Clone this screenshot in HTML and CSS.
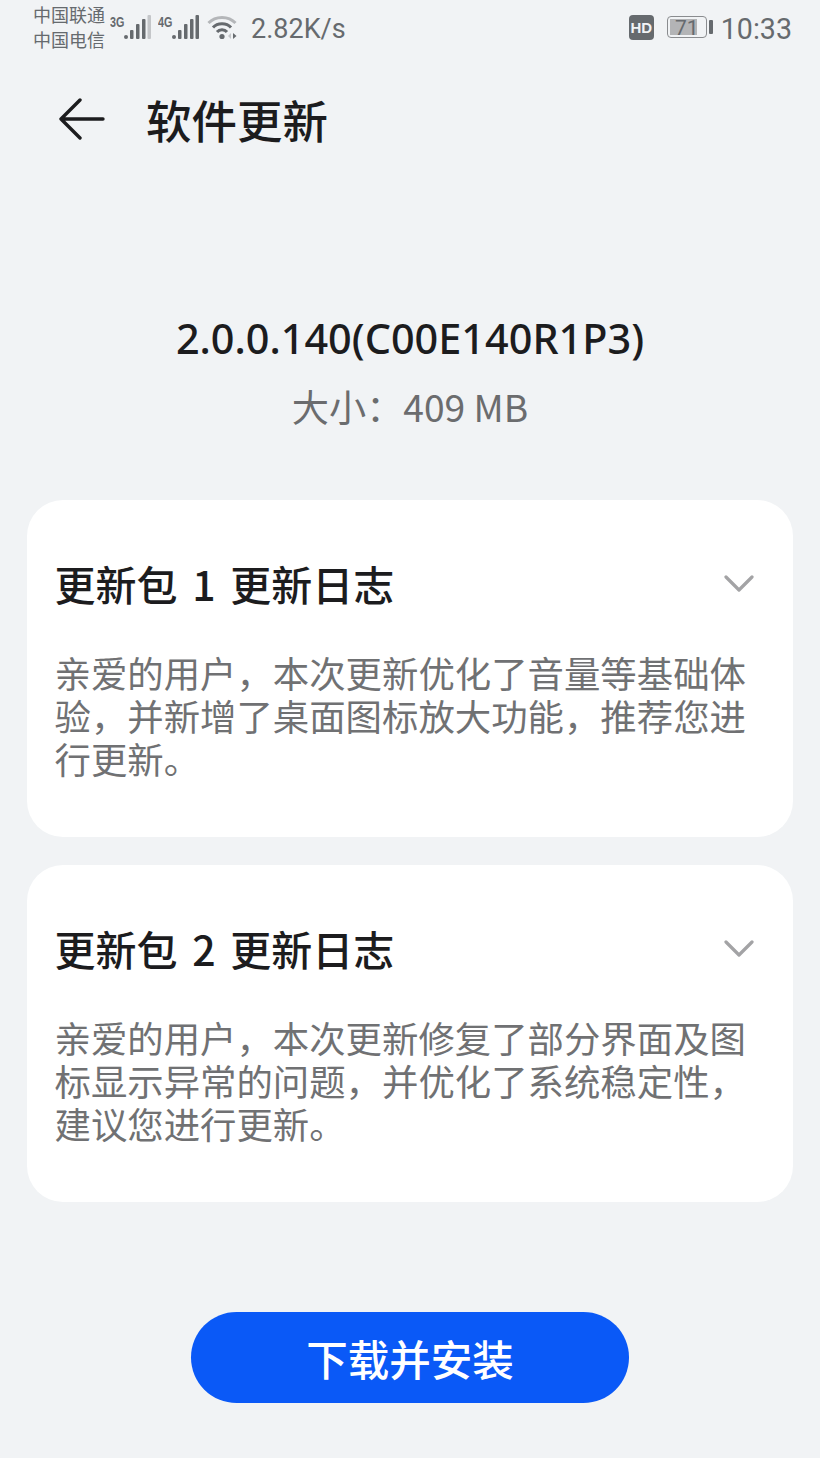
FILE: index.html
```html
<!DOCTYPE html>
<html lang="zh">

<head>
    <meta charset="utf-8">
    <title>软件更新</title>
    <link rel="stylesheet" href="styles.css">
</head>

<body>
    <div class="status-bar">
        <div class="status-left">
            <div class="carriers">
                <span>中国联通</span>
                <span>中国电信</span>
            </div>
            <div class="signal">
                <span class="net-label">3G</span>
                <svg width="27" height="26" viewBox="0 0 27 26">
                    <circle cx="2" cy="23" r="2" fill="#666a6e" />
                    <rect x="6" y="16" width="3.5" height="9" rx="1" fill="#666a6e" />
                    <rect x="12" y="10" width="3.5" height="15" rx="1" fill="#666a6e" />
                    <rect x="18" y="5" width="3.5" height="20" rx="1" fill="#666a6e" />
                    <rect x="23.5" y="1" width="3.5" height="24" rx="1" fill="#c4c6c9" />
                </svg>
            </div>
            <div class="signal">
                <span class="net-label">4G</span>
                <svg width="27" height="26" viewBox="0 0 27 26">
                    <circle cx="2" cy="23" r="2" fill="#666a6e" />
                    <rect x="6" y="16" width="3.5" height="9" rx="1" fill="#666a6e" />
                    <rect x="12" y="10" width="3.5" height="15" rx="1" fill="#666a6e" />
                    <rect x="18" y="5" width="3.5" height="20" rx="1" fill="#666a6e" />
                    <rect x="23.5" y="1" width="3.5" height="24" rx="1" fill="#666a6e" />
                </svg>
            </div>
            <svg class="wifi" width="32" height="26" viewBox="0 0 32 26" fill="none">
                <path d="M1.5 9C8.5 1.5 21.5 1.5 28.5 9" stroke="#b4b6b9" stroke-width="3" />
                <path d="M6 13.5C10.5 8.5 19.5 8.5 24 13.5" stroke="#666a6e" stroke-width="3" />
                <path d="M10 18C12.5 15 17.5 15 20 18" stroke="#666a6e" stroke-width="3" />
                <circle cx="15" cy="22.5" r="2.6" fill="#666a6e" />
                <path d="M24 19v6l-3-3z" fill="#c4c6c9" />
                <path d="M26 19v6l3.5-3z" fill="#666a6e" />
            </svg>
            <span class="speed">2.82K/s</span>
        </div>
        <div class="status-right">
            <span class="hd">HD</span>
            <div class="battery">
                <div class="battery-body">
                    <div class="battery-fill"></div>
                    <span class="battery-num">71</span>
                </div>
                <div class="battery-cap"></div>
            </div>
            <span class="clock">10:33</span>
        </div>
    </div>

    <div class="title-bar">
        <svg class="back" width="48" height="42" viewBox="0 0 48 42" fill="none">
            <path d="M22 2L3 21L22 40M3 21H45" stroke="#1c1c1e" stroke-width="3.4" stroke-linecap="round" stroke-linejoin="round" />
        </svg>
        <h1>软件更新</h1>
    </div>

    <div class="version">
        <div class="version-name">2.0.0.140(C00E140R1P3)</div>
        <div class="version-size">大小：409 MB</div>
    </div>

    <div class="cards">
        <div class="card">
            <div class="card-head">
                <h2>更新包 1 更新日志</h2>
                <svg width="30" height="18" viewBox="0 0 30 18" fill="none">
                    <path d="M2 3L15 16L28 3" stroke="#a3a3a5" stroke-width="3.2" stroke-linecap="round" stroke-linejoin="round" />
                </svg>
            </div>
            <p>亲爱的用户，本次更新优化了音量等基础体验，并新增了桌面图标放大功能，推荐您进行更新。</p>
        </div>
        <div class="card">
            <div class="card-head">
                <h2>更新包 2 更新日志</h2>
                <svg width="30" height="18" viewBox="0 0 30 18" fill="none">
                    <path d="M2 3L15 16L28 3" stroke="#a3a3a5" stroke-width="3.2" stroke-linecap="round" stroke-linejoin="round" />
                </svg>
            </div>
            <p>亲爱的用户，本次更新修复了部分界面及图标显示异常的问题，并优化了系统稳定性，建议您进行更新。</p>
        </div>
    </div>

    <div class="actions">
        <button class="install">下载并安装</button>
    </div>
</body>

</html>
```

FILE: styles.css
```css
* {
    box-sizing: border-box;
}

body {
    font-family: "Noto Sans CJK SC", sans-serif;
    background-color: #f1f3f5;
    color: #1c1c1e;
    height: 1458px;
    margin: 0;
    overflow: hidden;
}

.status-bar {
    display: flex;
    justify-content: space-between;
    align-items: center;
    height: 58px;
    padding: 0 28px 0 33px;
    color: #666a6e;
}

.status-left,
.status-right {
    display: flex;
    align-items: center;
}

.carriers {
    display: flex;
    flex-direction: column;
    font-size: 18px;
    line-height: 25px;
    width: 72px;
    margin-top: -4px;
}

.signal {
    display: flex;
    align-items: flex-start;
    margin-left: 5px;
    margin-top: -4px;
}

.signal + .signal {
    margin-left: 7px;
}

.net-label {
    font-family: "Liberation Sans", sans-serif;
    font-size: 15px;
    font-weight: 700;
    line-height: 15px;
    width: 14px;
    transform: scaleX(0.72);
    transform-origin: left top;
}

.wifi {
    margin-left: 8px;
    margin-top: -4px;
}

.speed {
    font-family: Roboto, sans-serif;
    font-size: 27px;
    margin-left: 12px;
}

.hd {
    background-color: #666a6e;
    color: #f1f3f5;
    font-family: "Liberation Sans", sans-serif;
    font-size: 15px;
    font-weight: 700;
    line-height: 25px;
    width: 25px;
    height: 25px;
    border-radius: 4px;
    text-align: center;
    margin-top: -3px;
}

.battery {
    display: flex;
    align-items: center;
    margin-left: 13px;
    margin-top: -4px;
}

.battery-body {
    position: relative;
    width: 40px;
    height: 22px;
    border: 1.5px solid #8a8c8f;
    border-radius: 4px;
    padding: 2px;
}

.battery-fill {
    width: 27px;
    height: 100%;
    background-color: #b3b4b6;
}

.battery-num {
    position: absolute;
    left: 0;
    right: 0;
    top: 0;
    text-align: center;
    font-family: Roboto, sans-serif;
    font-size: 21px;
    line-height: 22px;
}

.battery-cap {
    width: 4px;
    height: 14px;
    margin-left: 2px;
    background-color: #666a6e;
    border-radius: 1px;
}

.clock {
    font-family: Roboto, sans-serif;
    font-size: 28.6px;
    margin-left: 8px;
}

.title-bar {
    display: flex;
    align-items: center;
    height: 126px;
    padding-left: 58px;
}

.back {
    margin-top: -4px;
}

.title-bar h1 {
    font-size: 45.5px;
    font-weight: 500;
    line-height: 60px;
    margin: -4px 0 0 40px;
}

.version {
    text-align: center;
    padding-top: 126px;
}

.version-name {
    font-family: "Noto Sans", "Noto Sans CJK SC", sans-serif;
    font-size: 41.4px;
    font-weight: 500;
    line-height: 56px;
}

.version-size {
    color: #6b6c6e;
    font-size: 37.2px;
    line-height: 56px;
    margin-top: 12px;
}

.cards {
    display: flex;
    flex-direction: column;
    gap: 28px;
    margin: 66px 27px 0;
}

.card {
    background-color: #fff;
    border-radius: 36px;
    height: 337px;
    padding: 56px 39px 0 27.5px;
}

.card-head {
    display: flex;
    justify-content: space-between;
    align-items: center;
    height: 54px;
}

.card-head h2 {
    font-size: 41px;
    font-weight: 500;
    line-height: 54px;
    word-spacing: 5.5px;
    margin: 0;
}

.card-head svg {
    margin-top: 0;
}

.card p {
    color: #707173;
    font-size: 36.4px;
    line-height: 43px;
    margin: 41px -10px 0 0;
}

.actions {
    display: flex;
    justify-content: center;
    margin-top: 110px;
}

.install {
    background-color: #0a59f7;
    color: #fff;
    border: none;
    border-radius: 46px;
    font-family: inherit;
    font-size: 41.5px;
    font-weight: 500;
    width: 438px;
    height: 91px;
    padding: 0;
    cursor: pointer;
}
```
